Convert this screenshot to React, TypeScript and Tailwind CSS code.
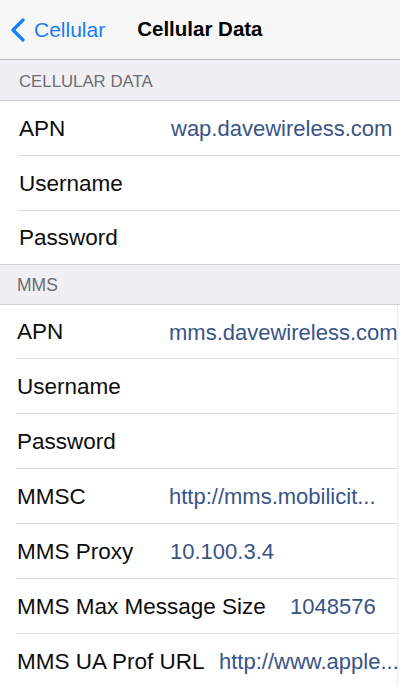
import React from "react";

const font = { fontFamily: '"Liberation Sans", Arial, Helvetica, sans-serif' };

export default function App() {
  return (
    <div className="w-[400px] h-[686px] overflow-hidden bg-white" style={font}>
      {/* Nav bar */}
      <div className="flex h-[60px] items-center border-b border-[#b8b8bc] bg-[#f7f7f8]">
        <div className="flex items-center pl-[10px]">
          <svg width="16" height="24" viewBox="0 0 16 24" className="mt-[1px]">
            <path d="M13 2 L3 12 L13 22" fill="none" stroke="#157efb" strokeWidth="3.2" strokeLinecap="round" strokeLinejoin="round" />
          </svg>
          <span className="ml-[8px] text-[21px] text-[#1a7cf6]">Cellular</span>
        </div>
        <div className="ml-[32px] text-[20.5px] font-bold text-black">Cellular Data</div>
      </div>

      {/* Cellular Data header */}
      <div className="flex h-[41px] items-center border-b border-[#cfcfd3] bg-[#efeff4] pl-[19px] pt-[3px] text-[16.8px] text-[#6d6d72]">
        CELLULAR DATA
      </div>
      <div>
        <div className="relative flex h-[55px] items-center bg-white pl-[19px]">
          <div className="w-[152px] shrink-0 text-[22.5px] text-[#0d0d0d]">APN</div>
          <div className="text-[22px] text-[#385487] whitespace-nowrap">wap.davewireless.com</div>
          <div className="absolute bottom-0 left-[18px] right-0 h-px bg-[#dcdcde]" />
        </div>
        <div className="relative flex h-[55px] items-center bg-white pl-[19px]">
          <div className="text-[22.5px] text-[#0d0d0d]">Username</div>
          <div className="absolute bottom-0 left-[18px] right-0 h-px bg-[#dcdcde]" />
        </div>
        <div className="flex h-[53px] items-center bg-white pl-[19px]">
          <div className="text-[22.5px] text-[#0d0d0d]">Password</div>
        </div>
      </div>

      {/* MMS header */}
      <div className="flex h-[41px] items-center border-y border-[#cfcfd3] bg-[#efeff4] pl-[17px] pt-[1px] text-[17.5px] text-[#6d6d72]">
        MMS
      </div>
      <div className="w-[398px] border-r border-[#ececec]">
        <div className="relative flex h-[54px] items-center overflow-hidden bg-white pl-[17px]">
          <div className="w-[152px] shrink-0 text-[22.5px] text-[#0d0d0d]">APN</div>
          <div className="text-[22px] text-[#385487] whitespace-nowrap">mms.davewireless.com</div>
          <div className="absolute bottom-0 left-[16px] right-0 h-px bg-[#dcdcde]" />
        </div>
        <div className="relative flex h-[55px] items-center bg-white pl-[17px]">
          <div className="text-[22.5px] text-[#0d0d0d]">Username</div>
          <div className="absolute bottom-0 left-[16px] right-0 h-px bg-[#dcdcde]" />
        </div>
        <div className="relative flex h-[55px] items-center bg-white pl-[17px]">
          <div className="text-[22.5px] text-[#0d0d0d]">Password</div>
          <div className="absolute bottom-0 left-[16px] right-0 h-px bg-[#dcdcde]" />
        </div>
        <div className="relative flex h-[55px] items-center bg-white pl-[17px]">
          <div className="w-[152px] shrink-0 text-[22.5px] text-[#0d0d0d]">MMSC</div>
          <div className="text-[22px] text-[#385487] whitespace-nowrap">http://mms.mobilicit...</div>
          <div className="absolute bottom-0 left-[16px] right-0 h-px bg-[#dcdcde]" />
        </div>
        <div className="relative flex h-[55px] items-center bg-white pl-[17px]">
          <div className="w-[153px] shrink-0 text-[22.5px] text-[#0d0d0d]">MMS Proxy</div>
          <div className="text-[22px] text-[#385487] whitespace-nowrap">10.100.3.4</div>
          <div className="absolute bottom-0 left-[16px] right-0 h-px bg-[#dcdcde]" />
        </div>
        <div className="relative flex h-[55px] items-center bg-white pl-[17px]">
          <div className="w-[273px] shrink-0 text-[22.5px] text-[#0d0d0d] whitespace-nowrap">MMS Max Message Size</div>
          <div className="text-[22px] text-[#385487] whitespace-nowrap">1048576</div>
          <div className="absolute bottom-0 left-[16px] right-0 h-px bg-[#dcdcde]" />
        </div>
        <div className="relative flex h-[55px] items-center bg-white pl-[17px]">
          <div className="w-[202px] shrink-0 text-[22.5px] text-[#0d0d0d] whitespace-nowrap">MMS UA Prof URL</div>
          <div className="text-[22px] text-[#385487] whitespace-nowrap">http://www.apple...</div>
        </div>
      </div>
    </div>
  );
}
